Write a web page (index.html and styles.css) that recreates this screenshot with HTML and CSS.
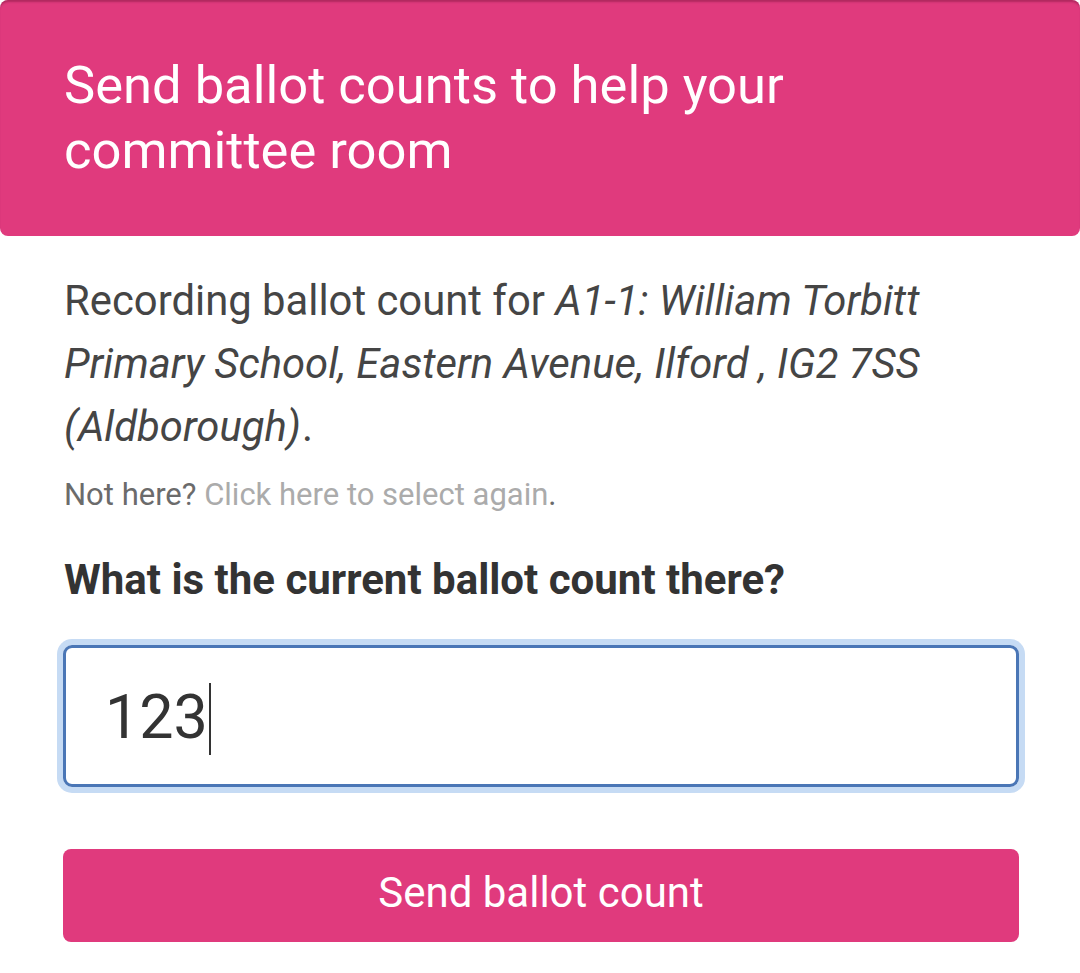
FILE: index.html
```html
<!DOCTYPE html>
<html lang="en">
<head>
<meta charset="utf-8">
<title>Send ballot counts</title>
<link rel="stylesheet" href="styles.css">
</head>
<body>
<div class="page">
  <header class="banner">
    <h1 class="banner-title">Send ballot counts to help your committee room</h1>
  </header>
  <main class="content">
    <p class="recording">Recording ballot count for <em>A1-1: William Torbitt Primary School, Eastern Avenue, Ilford , IG2 7SS (Aldborough)</em>.</p>
    <p class="not-here">Not here? <a class="reselect" href="#">Click here to select again</a>.</p>
    <label class="question" for="count">What is the current ballot count there?</label>
    <div class="field">
      <div class="input-box"><span class="value">123</span><span class="caret"></span></div>
    </div>
    <button class="send" type="button">Send ballot count</button>
  </main>
</div>
</body>
</html>
```
FILE: styles.css
```css
* { box-sizing: border-box; }
html, body { margin: 0; padding: 0; background: #ffffff; }
body { font-family: Roboto, "Noto Sans", sans-serif; color: #3d3d3d; }
.page { width: 1080px; height: 973px; overflow: hidden; }

.banner {
  background: #e03a7d;
  border-radius: 8px;
  height: 236px;
  padding: 53px 64px 0 64px;
  box-shadow: inset 0 3px 2px -1px rgba(120, 20, 60, 0.45);
}
.banner-title {
  margin: 0;
  font-weight: 400;
  font-size: 52.5px;
  line-height: 65px;
  color: #ffffff;
  width: 780px;
}

.content { padding: 33px 62px 0 64px; }
.recording {
  margin: 0;
  font-size: 41.8px;
  line-height: 63px;
  color: #454545;
}
.recording em { font-style: italic; padding-right: 1px; }
.not-here {
  margin: 17px 0 0 0;
  font-size: 31px;
  line-height: 40px;
  color: #6b6b6b;
}
.reselect { color: #ababab; text-decoration: none; }
.question {
  display: block;
  margin-top: 40px;
  font-size: 42px;
  font-weight: 700;
  line-height: 50px;
  color: #333333;
}
.field { margin-top: 40px; margin-left: -1px; }
.input-box {
  width: 956px;
  height: 142px;
  border: 3px solid #4a76b6;
  border-radius: 9px;
  box-shadow: 0 0 0 6px #c6dbf4;
  display: flex;
  align-items: center;
  padding-left: 39px;
  padding-top: 2px;
  font-size: 61px;
  color: #333333;
}
.value { line-height: 1; }
.caret { width: 2px; height: 72px; background: #333; margin-left: 1px; margin-top: 4px; }
.send {
  display: flex;
  align-items: center;
  justify-content: center;
  margin-top: 62px;
  margin-left: -1px;
  width: 956px;
  height: 93px;
  border: 0;
  border-radius: 8px;
  background: #e03a7d;
  color: #ffffff;
  font-family: Roboto, "Noto Sans", sans-serif;
  font-size: 42px;
  padding: 0 0 6px 0;
}
```
